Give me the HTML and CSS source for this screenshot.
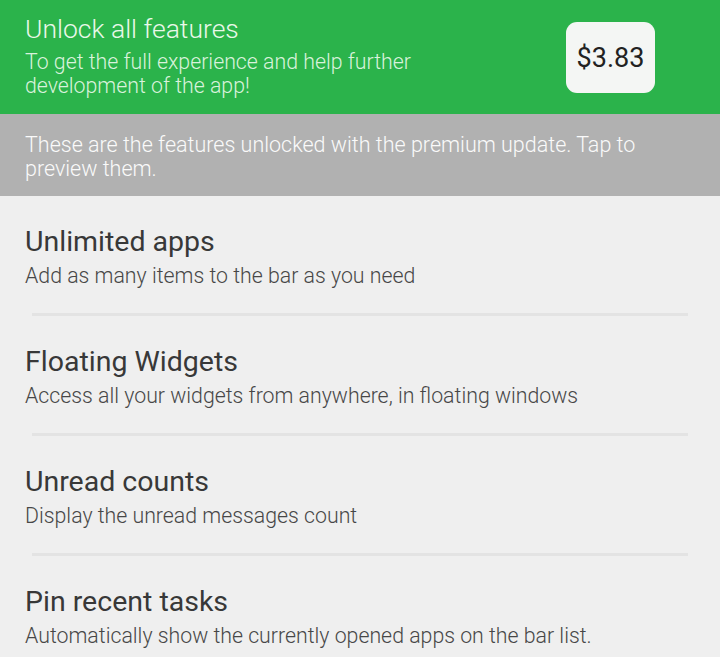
FILE: index.html
```html
<!DOCTYPE html>
<html lang="en">
<head>
    <meta charset="UTF-8">
    <meta name="viewport" content="width=device-width, initial-scale=1.0">
    <title>Premium</title>
    <link rel="stylesheet" href="styles.css">
</head>
<body>
    <div class="unlock">
        <div class="unlock-text">
            <h1>Unlock all features</h1>
            <p>To get the full experience and help further development of the app!</p>
        </div>
        <button type="button" class="price">$3.83</button>
    </div>

    <div class="notice">
        These are the features unlocked with the premium update. Tap to preview them.
    </div>

    <ul class="features">
        <li class="feature">
            <h2>Unlimited apps</h2>
            <p>Add as many items to the bar as you need</p>
        </li>
        <li class="feature">
            <h2>Floating Widgets</h2>
            <p>Access all your widgets from anywhere, in floating windows</p>
        </li>
        <li class="feature">
            <h2>Unread counts</h2>
            <p>Display the unread messages count</p>
        </li>
        <li class="feature">
            <h2>Pin recent tasks</h2>
            <p>Automatically show the currently opened apps on the bar list.</p>
        </li>
    </ul>
</body>
</html>
```

FILE: styles.css
```css
body {
    margin: 0;
    font-family: Roboto, "Noto Sans", sans-serif;
    font-weight: 300;
    background-color: #efefef;
    color: #333;
}
.unlock {
    display: flex;
    align-items: flex-start;
    justify-content: space-between;
    background-color: #2bb34b;
    height: 114px;
    padding: 14px 65px 0 25px;
    box-sizing: border-box;
}
.unlock-text {
    width: 440px;
}
.unlock h1 {
    margin: 0 0 6px;
    font-size: 26.5px;
    font-weight: 300;
    line-height: 30px;
    color: #e9f8e9;
}
.unlock p {
    margin: 0;
    font-size: 21.3px;
    line-height: 24px;
    color: #d9f2dc;
}
.price {
    margin-top: 8px;
    width: 89px;
    height: 71px;
    border: none;
    border-radius: 11px;
    background-color: #f4f6f4;
    color: #222;
    font-family: Roboto, sans-serif;
    font-size: 27px;
    font-weight: 400;
    padding: 0;
    cursor: pointer;
}
.notice {
    background-color: #b1b1b1;
    color: #fafafa;
    font-size: 21.5px;
    line-height: 24px;
    padding: 19px 60px 15px 25px;
    height: 82px;
    box-sizing: border-box;
}
.features {
    list-style: none;
    margin: 0;
    padding: 0;
}
.feature {
    margin: 0 32px;
    padding: 30px 0 23px;
    border-bottom: 3px solid #e3e3e3;
}
.feature:last-child {
    border-bottom: none;
}
.feature h2 {
    margin: 0 0 4px -7px;
    font-size: 28.5px;
    font-weight: 400;
    line-height: 32px;
    color: #383838;
}
.feature p {
    margin: 0 0 0 -7px;
    font-size: 21.3px;
    line-height: 28px;
    color: #474747;
}
```
